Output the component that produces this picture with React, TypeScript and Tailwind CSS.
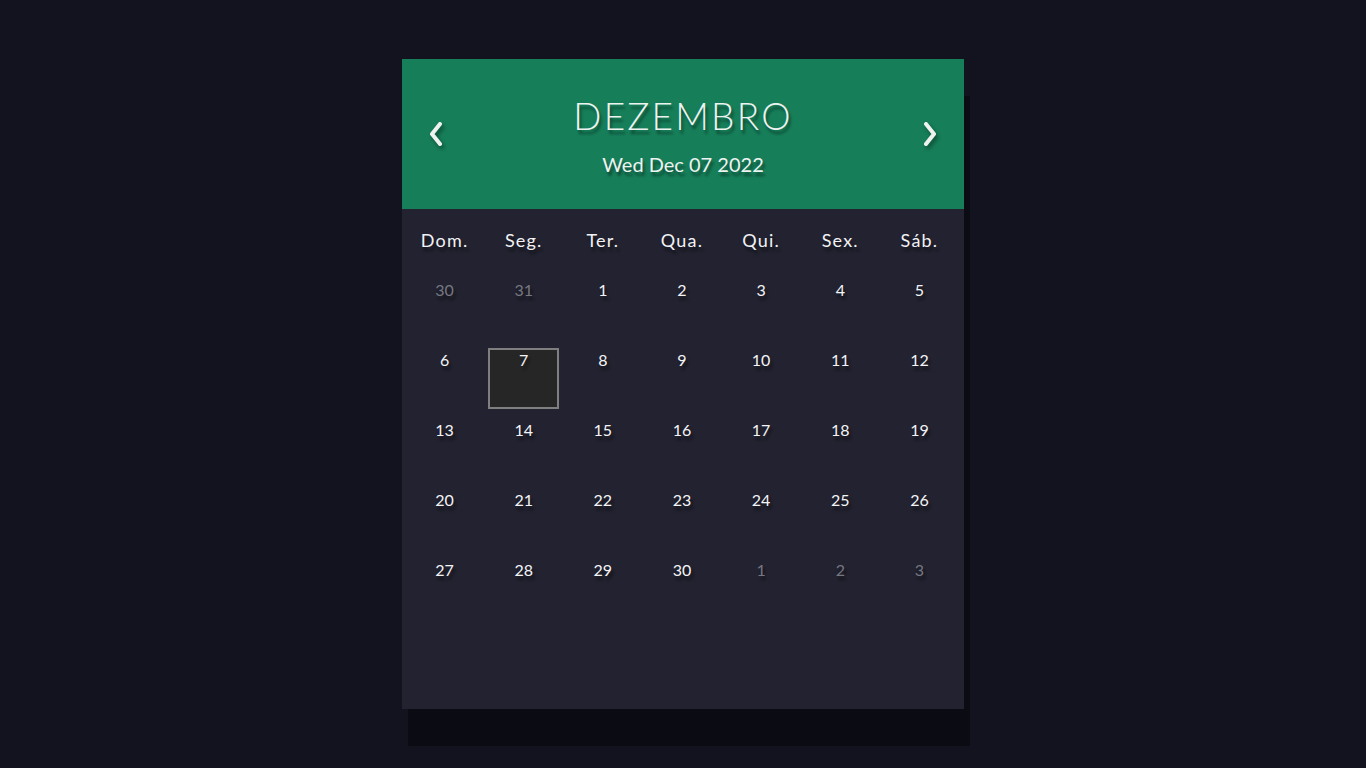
const WEEKDAYS = ['Dom.', 'Seg.', 'Ter.', 'Qua.', 'Qui.', 'Sex.', 'Sáb.'];

type Day = { n: number; muted?: boolean; selected?: boolean };

const DAYS: Day[] = [
  { n: 30, muted: true },
  { n: 31, muted: true },
  ...Array.from({ length: 30 }, (_, i) => ({ n: i + 1, selected: i + 1 === 7 })),
  { n: 1, muted: true },
  { n: 2, muted: true },
  { n: 3, muted: true },
];

const shadow = '[text-shadow:2px_4px_3px_rgba(0,0,0,0.45)]';

function Chevron({ dir }: { dir: 'left' | 'right' }) {
  return (
    <svg width="20" height="28" viewBox="0 0 20 28" className="drop-shadow-[2px_3px_2px_rgba(0,0,0,0.4)]">
      <polyline
        points={dir === 'left' ? '14,4 6,14 14,24' : '6,4 14,14 6,24'}
        fill="none"
        stroke="#eef3f0"
        strokeWidth="4"
        strokeLinecap="round"
        strokeLinejoin="round"
      />
    </svg>
  );
}

export default function App() {
  return (
    <div className="min-h-screen w-full bg-[#13131f] pt-[59px] font-['Lato','Noto_Sans',sans-serif]">
      <div className="mx-auto h-[650px] w-[562px] bg-[#222230] shadow-[6px_37px_0_#0b0b13]">
        <header className="flex h-[150px] items-center justify-between bg-[#167f5a] px-[24px] text-[#eef3f0]">
          <button>
            <Chevron dir="left" />
          </button>
          <div className="flex flex-col items-center pt-[2px]">
            <h1 className={`text-[37px] font-light leading-none tracking-[2.2px] ${shadow}`}>DEZEMBRO</h1>
            <p className={`mt-[20px] text-[20px] leading-none ${shadow}`}>Wed Dec 07 2022</p>
          </div>
          <button>
            <Chevron dir="right" />
          </button>
        </header>

        <div className="grid grid-cols-7 pl-[3px] pr-[5px] pt-[20px] text-[#f2f2f5]">
          {WEEKDAYS.map((w) => (
            <div key={w} className={`h-[45px] text-center text-[18px] leading-[22px] tracking-[1.2px] ${shadow}`}>
              {w}
            </div>
          ))}
          {DAYS.map((d, i) => (
            <div key={i} className="h-[70px] p-1">
              <div
                className={`flex h-[61px] justify-center text-[16px] leading-[20px] ${shadow} ${
                  d.selected ? 'border-2 border-[#7f7f7f] bg-[#262626] pt-0' : 'pt-[2px]'
                } ${d.muted ? 'text-[#777781]' : 'text-[#f4f4f6]'}`}
              >
                {d.n}
              </div>
            </div>
          ))}
        </div>
      </div>
    </div>
  );
}
